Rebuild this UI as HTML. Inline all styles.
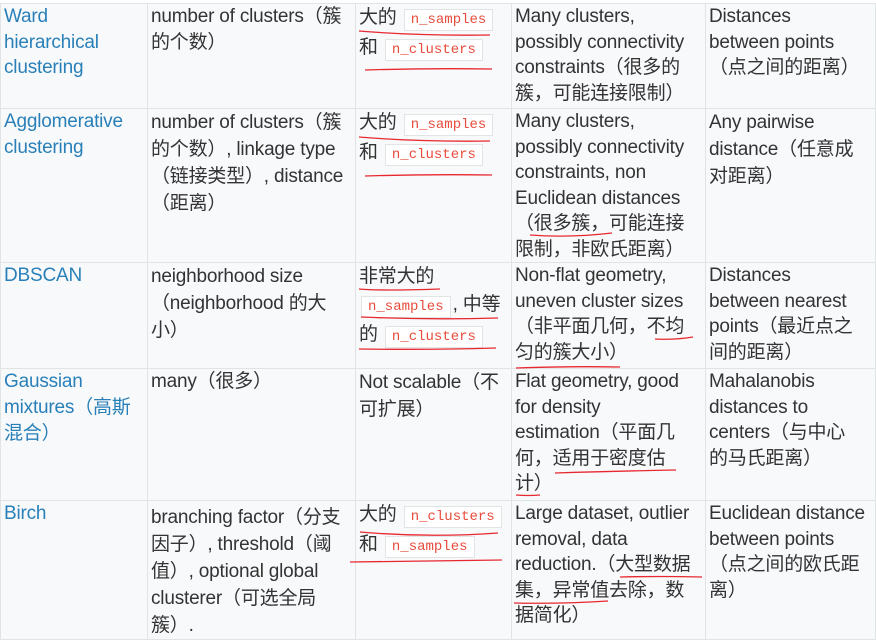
<!DOCTYPE html><html><head><meta charset="utf-8"><style>
body{margin:0;width:876px;height:640px;overflow:hidden;background:#fff;font-family:"Liberation Sans","Noto Sans CJK SC",sans-serif;}
.c{position:absolute;box-sizing:border-box;background:#f8f9fb;border-right:1px solid #e1e4e5;border-bottom:1px solid #e1e4e5;padding:0 2px 0 3px;font-size:19px;line-height:25.5px;color:#333;white-space:nowrap;letter-spacing:-0.2px;}
.c.a{color:#2980b9;}
code{font-family:"Liberation Mono",monospace;font-size:14px;color:#e74c3c;background:#fff;border:1px solid #e1e4e5;padding:2px 6px;margin:0 2px;letter-spacing:0;}
svg{position:absolute;left:0;top:0;}
</style></head><body>
<div class="c a" style="left:0;top:3px;width:148px;height:106px;border-left:1px solid #e1e4e5;border-top:1px solid #e1e4e5">Ward<br>hierarchical<br>clustering</div>
<div class="c" style="left:148px;top:3px;width:208px;height:106px;border-top:1px solid #e1e4e5">number of clusters（簇<br>的个数）</div>
<div class="c" style="left:356px;top:3px;width:156px;height:106px;border-top:1px solid #e1e4e5;line-height:28px">大的 <code>n_samples</code><br>和 <code>n_clusters</code></div>
<div class="c" style="left:512px;top:3px;width:194px;height:106px;border-top:1px solid #e1e4e5">Many clusters,<br>possibly connectivity<br>constraints（很多的<br>簇，可能连接限制）</div>
<div class="c" style="left:706px;top:3px;width:170px;height:106px;border-top:1px solid #e1e4e5">Distances<br>between points<br>（点之间的距离）</div>

<div class="c a" style="left:0;top:109px;width:148px;height:154px;border-left:1px solid #e1e4e5">Agglomerative<br>clustering</div>
<div class="c" style="left:148px;top:109px;width:208px;height:154px;line-height:27px">number of clusters（簇<br>的个数）, linkage type<br>（链接类型）, distance<br>（距离）</div>
<div class="c" style="left:356px;top:109px;width:156px;height:154px;line-height:28px">大的 <code>n_samples</code><br>和 <code>n_clusters</code></div>
<div class="c" style="left:512px;top:109px;width:194px;height:154px">Many clusters,<br>possibly connectivity<br>constraints, non<br>Euclidean distances<br>（很多簇，可能连接<br>限制，非欧氏距离）</div>
<div class="c" style="left:706px;top:109px;width:170px;height:154px;line-height:27px">Any pairwise<br>distance（任意成<br>对距离）</div>

<div class="c a" style="left:0;top:263px;width:148px;height:106px;border-left:1px solid #e1e4e5">DBSCAN</div>
<div class="c" style="left:148px;top:263px;width:208px;height:106px;line-height:27px">neighborhood size<br>（neighborhood 的大<br>小）</div>
<div class="c" style="left:356px;top:263px;width:156px;height:106px;line-height:28px">非常大的<br><code>n_samples</code>, 中等<br>的 <code>n_clusters</code></div>
<div class="c" style="left:512px;top:263px;width:194px;height:106px">Non-flat geometry,<br>uneven cluster sizes<br>（非平面几何，不均<br>匀的簇大小）</div>
<div class="c" style="left:706px;top:263px;width:170px;height:106px">Distances<br>between nearest<br>points（最近点之<br>间的距离）</div>

<div class="c a" style="left:0;top:369px;width:148px;height:132px;border-left:1px solid #e1e4e5;line-height:26px">Gaussian<br>mixtures（高斯<br>混合）</div>
<div class="c" style="left:148px;top:369px;width:208px;height:132px">many（很多）</div>
<div class="c" style="left:356px;top:369px;width:156px;height:132px;line-height:27px">Not scalable（不<br>可扩展）</div>
<div class="c" style="left:512px;top:369px;width:194px;height:132px">Flat geometry, good<br>for density<br>estimation（平面几<br>何，适用于密度估<br>计）</div>
<div class="c" style="left:706px;top:369px;width:170px;height:132px">Mahalanobis<br>distances to<br>centers（与中心<br>的马氏距离）</div>

<div class="c a" style="left:0;top:501px;width:148px;height:139px;border-left:1px solid #e1e4e5">Birch</div>
<div class="c" style="left:148px;top:501px;width:208px;height:139px;padding-top:3px;line-height:27px">branching factor（分支<br>因子）, threshold（阈<br>值）, optional global<br>clusterer（可选全局<br>簇）.</div>
<div class="c" style="left:356px;top:501px;width:156px;height:139px;line-height:28px">大的 <code>n_clusters</code><br>和 <code>n_samples</code></div>
<div class="c" style="left:512px;top:501px;width:194px;height:139px">Large dataset, outlier<br>removal, data<br>reduction.（大型数据<br>集，异常值去除，数<br>据简化）</div>
<div class="c" style="left:706px;top:501px;width:170px;height:139px">Euclidean distance<br>between points<br>（点之间的欧氏距<br>离）</div>

<svg width="876" height="640" fill="none" stroke="#e8282f" stroke-width="1.3">
<path d="M359 31 Q420 36 490 35"/><path d="M365 70 Q430 68 492 69"/>
<path d="M359 137 Q420 142 490 141"/><path d="M365 176 Q430 174 492 175"/>
<path d="M359 289 Q380 291 440 289"/><path d="M361 317 Q430 320 498 318"/><path d="M359 349 Q430 350 496 348"/>
<path d="M655 339 Q675 340 693 337"/><path d="M516 368 Q570 366 620 367"/>
<path d="M530 235 Q570 238 612 233"/>
<path d="M555 473 Q620 471 676 470"/><path d="M516 495 Q528 496 540 495"/>
<path d="M360 532 Q430 538 498 533"/><path d="M350 562 Q430 561 502 560"/>
<path d="M620 577 Q660 576 702 577"/><path d="M514 603 Q560 604 608 601"/>
</svg>
</body></html>
